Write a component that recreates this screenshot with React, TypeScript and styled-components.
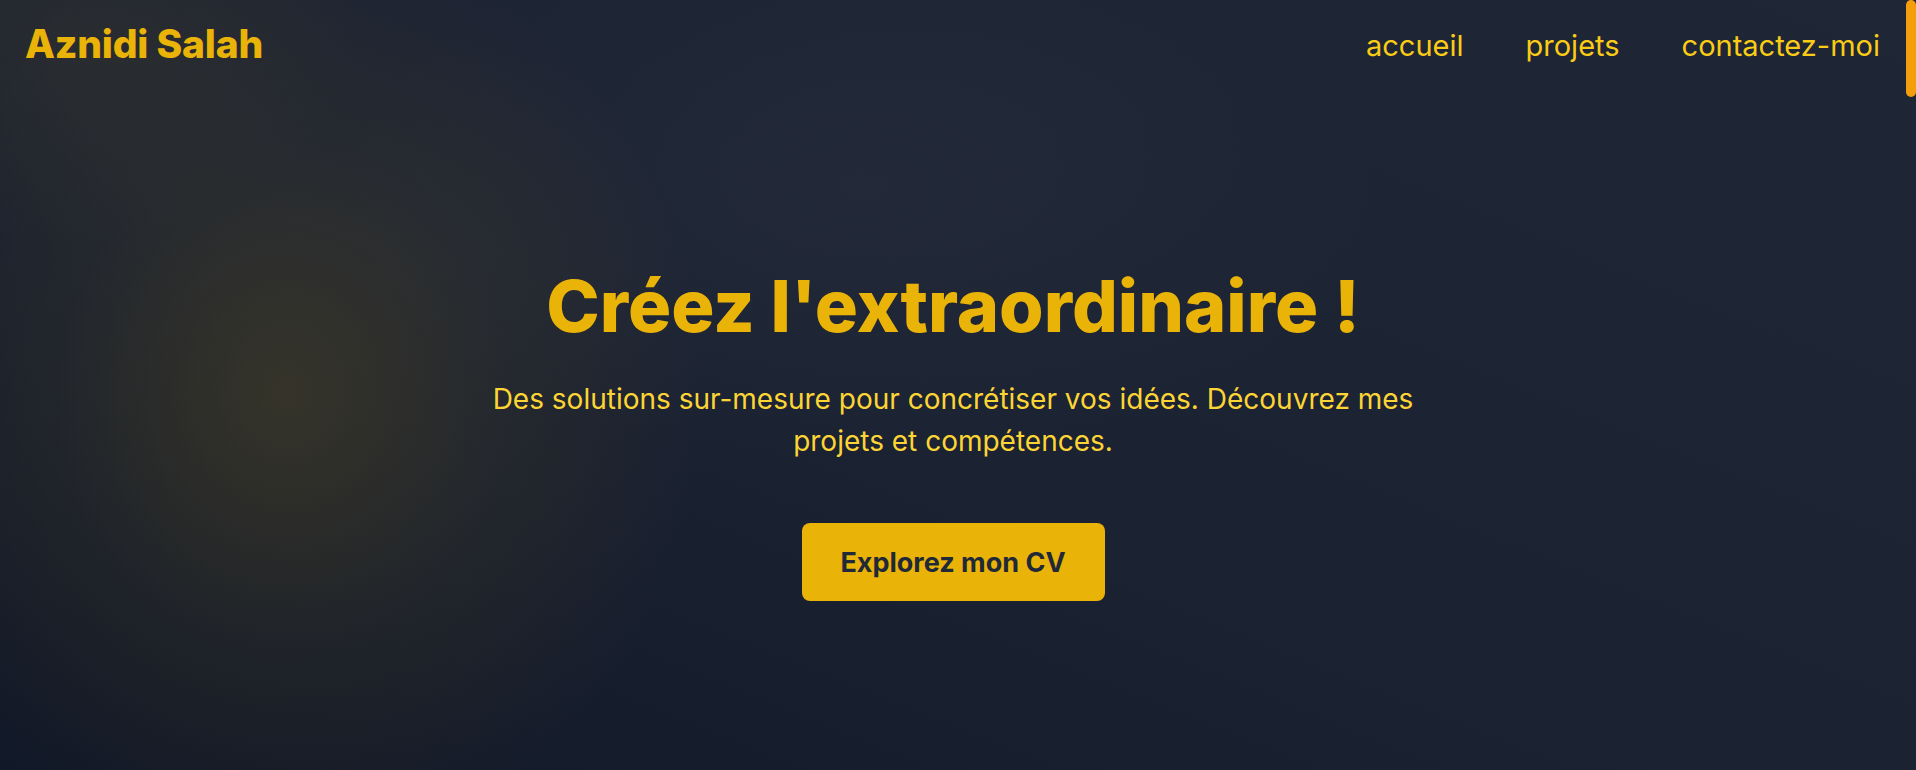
import React from "react";
import styled, { createGlobalStyle } from "styled-components";

const GlobalStyle = createGlobalStyle`
  html, body {
    margin: 0;
    padding: 0;
    background: #111827;
  }
  body {
    font-family: Inter, "Noto Sans", "Liberation Sans", sans-serif;
    overflow: hidden;
  }
  * { box-sizing: border-box; }
`;

const Page = styled.div`
  position: relative;
  min-height: 100vh;
  display: flex;
  flex-direction: column;
  padding-right: 10px;
  background:
    radial-gradient(ellipse 420px 470px at 285px 395px, rgba(234, 179, 8, 0.14), rgba(234, 179, 8, 0.05) 55%, transparent 100%),
    radial-gradient(ellipse 540px 280px at 860px 190px, rgba(200, 200, 180, 0.035), transparent 100%),
    radial-gradient(ellipse 300px 220px at 60px 30px, rgba(234, 179, 8, 0.06), transparent 100%),
    linear-gradient(to top right, #111827 0%, #1b2232 45%, #1f2636 100%);
`;

const Header = styled.header`
  height: 90px;
  display: flex;
  align-items: center;
  justify-content: space-between;
  padding: 0 26px 0 25px;
`;

const Logo = styled.a`
  font-size: 39px;
  font-weight: 800;
  color: #eab308;
  text-decoration: none;
  letter-spacing: -0.2px;
  margin-top: -4px;
`;

const Nav = styled.nav`
  display: flex;
  align-items: center;
  gap: 62px;
`;

const NavLink = styled.a`
  font-size: 29px;
  font-weight: 400;
  color: #facc15;
  text-decoration: none;
`;

const Hero = styled.main`
  flex: 1;
  display: flex;
  flex-direction: column;
  align-items: center;
  justify-content: flex-start;
  text-align: center;
  padding-top: 174px;
`;

const Title = styled.h1`
  margin: 0;
  font-size: 72px;
  line-height: 84px;
  font-weight: 800;
  color: #eab308;
`;

const Subtitle = styled.p`
  margin: 30px 0 0;
  max-width: 960px;
  font-size: 28px;
  line-height: 42px;
  font-weight: 400;
  color: #fcd535;
`;

const Cta = styled.a`
  margin-top: 61px;
  width: 303px;
  height: 78px;
  display: flex;
  align-items: center;
  justify-content: center;
  background: #eab308;
  color: #1f2937;
  border-radius: 8px;
  font-size: 27px;
  font-weight: 700;
  text-decoration: none;
`;

const ScrollThumb = styled.div`
  position: fixed;
  top: 0;
  right: 0;
  width: 10px;
  height: 97px;
  background: #f59e0b;
  border-radius: 10px;
`;

export default function App() {
  return (
    <>
      <GlobalStyle />
      <Page>
        <Header>
          <Logo href="#">Aznidi Salah</Logo>
          <Nav>
            <NavLink href="#">accueil</NavLink>
            <NavLink href="#">projets</NavLink>
            <NavLink href="#">contactez-moi</NavLink>
          </Nav>
        </Header>
        <Hero>
          <Title>Créez l'extraordinaire !</Title>
          <Subtitle>
            Des solutions sur-mesure pour concrétiser vos idées. Découvrez mes projets et compétences.
          </Subtitle>
          <Cta href="#">Explorez mon CV</Cta>
        </Hero>
        <ScrollThumb />
      </Page>
    </>
  );
}
